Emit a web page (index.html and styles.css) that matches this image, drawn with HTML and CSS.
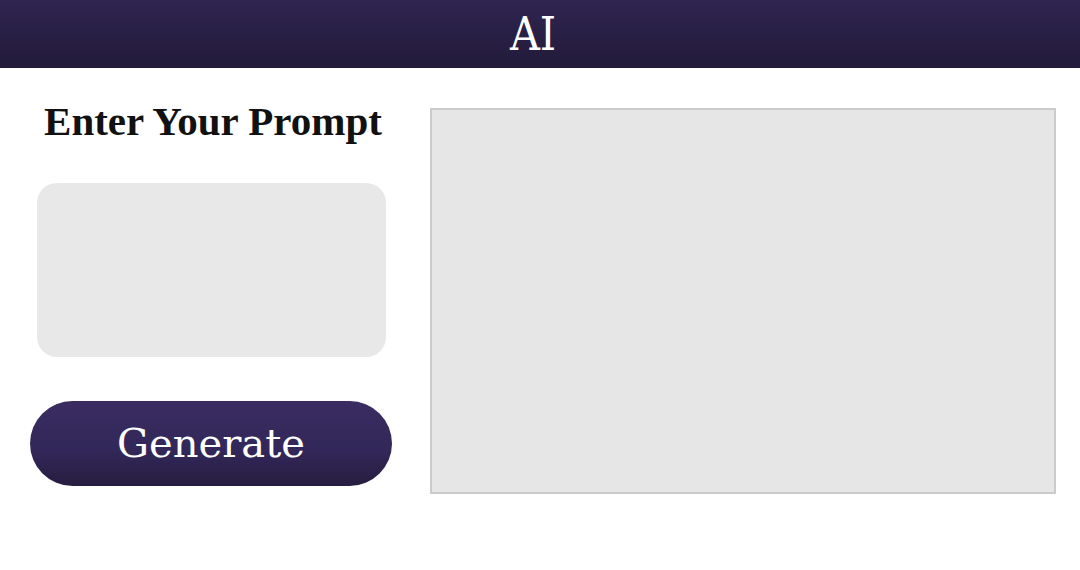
FILE: index.html
```html
<!DOCTYPE html>
<html lang="en">
<head>
  <meta charset="UTF-8">
  <title>AI</title>
  <link rel="stylesheet" href="styles.css">
</head>
<body>
  <header class="topbar">
    <h1 class="brand">AI</h1>
  </header>

  <main class="workspace">
    <!-- prompt side -->
    <section class="prompt-col">
      <h2 class="prompt-title">Enter Your Prompt</h2>
      <textarea class="prompt-input" id="prompt"></textarea>
      <button class="generate-btn" id="generate">Generate</button>
    </section>

    <!-- result -->
    <div class="result-box" id="result"></div>
  </main>
</body>
</html>
```

FILE: styles.css
```css
html, body {
  margin: 0;
  padding: 0;
  background: #fff;
  font-family: "DejaVu Serif", serif;
}
.topbar {
  height: 68px;
  display: flex;
  align-items: center;
  justify-content: center;
  background: linear-gradient(to bottom, #2f2551 0%, #221a39 100%);
}
.brand {
  margin: 0;
  font-family: "DejaVu Serif", serif;
  font-stretch: condensed;
  font-weight: normal;
  font-size: 46px;
  line-height: 46px;
  color: #fff;
  padding-right: 14px;
}
.workspace {
  display: flex;
  align-items: flex-start;
  gap: 38px;
  padding: 40px 24px 0 30px;
}
.prompt-col {
  width: 362px;
  flex: none;
  display: flex;
  flex-direction: column;
  align-items: center;
}
.prompt-title {
  margin: -7px 0 0 4px;
  font-family: "Liberation Serif", serif;
  font-weight: bold;
  font-size: 41px;
  line-height: 40px;
  color: #111;
  white-space: nowrap;
}
.prompt-input {
  width: 349px;
  height: 174px;
  margin-top: 42px;
  box-sizing: border-box;
  border: none;
  border-radius: 20px;
  background: #e8e8e8;
  resize: none;
  outline: none;
  padding: 14px;
  font-family: "DejaVu Serif", serif;
  font-size: 16px;
}
.generate-btn {
  width: 362px;
  height: 85px;
  margin-top: 44px;
  border: none;
  border-radius: 43px;
  background: linear-gradient(to bottom, #3a2c61 0%, #33285a 55%, #271d40 100%);
  color: #fff;
  font-family: "DejaVu Serif", serif;
  font-size: 40px;
  cursor: pointer;
  padding: 0 0 2px 0;
}
.result-box {
  flex: 1;
  height: 386px;
  box-sizing: border-box;
  border: 2px solid #cbcbcb;
  background: #e6e6e6;
}
```
